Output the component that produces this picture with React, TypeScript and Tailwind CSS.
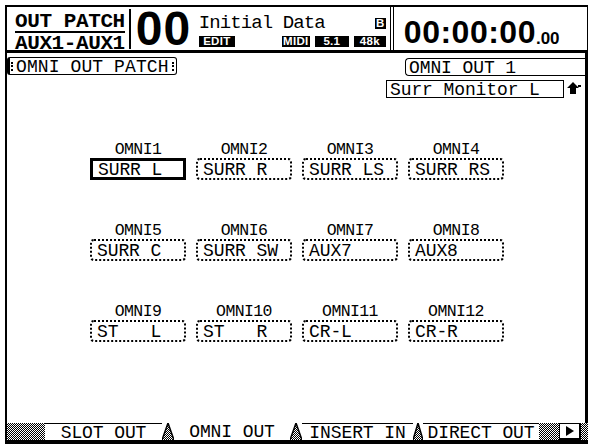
import React from "react";

const lcd = "font-['Liberation_Mono',monospace]";
const dither =
  "bg-[repeating-conic-gradient(#000_0_25%,#fff_0_50%)] bg-[length:2px_2px]";

const slots = [
  ["OMNI1", "SURR L"],
  ["OMNI2", "SURR R"],
  ["OMNI3", "SURR LS"],
  ["OMNI4", "SURR RS"],
  ["OMNI5", "SURR C"],
  ["OMNI6", "SURR SW"],
  ["OMNI7", "AUX7"],
  ["OMNI8", "AUX8"],
  ["OMNI9", "ST   L"],
  ["OMNI10", "ST   R"],
  ["OMNI11", "CR-L"],
  ["OMNI12", "CR-R"],
];

function Tag({ text, width }: { text: string; width: string }) {
  return (
    <span
      className={`${width} h-[11px] flex items-center justify-center bg-black text-white font-['Liberation_Sans',sans-serif] font-bold text-[11.5px] leading-none tracking-[0.3px] pt-[1px]`}
    >
      {text}
    </span>
  );
}

function Header() {
  return (
    <div className="flex h-[48px] border-t-2 border-l-2 border-b-[3px] border-black">
      <div className="flex items-center">
        <div className="pl-[8px] pr-[4px] pt-[4px] border-r-2 border-black h-[40px] font-['Liberation_Mono',monospace] font-bold text-[21px] leading-[17px] tracking-[-0.4px]">
          <div className="border-b-2 border-black pb-[1px]">OUT PATCH</div>
          <div className="pt-[2px]">AUX1-AUX1</div>
        </div>
        <div className="pl-[5px] w-[64px] font-['Liberation_Sans',sans-serif] font-bold text-[48px] leading-none tracking-[1px]">
          00
        </div>
      </div>
      <div className="w-[196px] pl-[4px] pr-[4px] flex flex-col justify-between pb-[3px] pt-[6px] border-r-[1.5px] border-black">
        <div className="flex items-center justify-between">
          <span className={`${lcd} text-[19px] leading-[20px] tracking-[-0.9px]`}>
            Initial Data
          </span>
          <Tag text="B" width="w-[11px]" />
        </div>
        <div className="flex items-center">
          <Tag text="EDIT" width="w-[36px]" />
          <span className="ml-auto flex gap-[5px]">
            <Tag text="MIDI" width="w-[28px]" />
            <Tag text="5.1" width="w-[34px]" />
            <Tag text="48k" width="w-[32px]" />
          </span>
        </div>
      </div>
      <div className="ml-[2px] flex-1 border-l-[1.5px] border-r-[1.5px] border-black flex items-end pl-[10px] pb-[5px] font-['Liberation_Sans',sans-serif] font-bold">
        <span className="text-[32px] leading-[26px] tracking-[0.5px]">00:00:00</span>
        <span className="text-[17px] leading-[13px]">.00</span>
      </div>
    </div>
  );
}

function UpArrow() {
  return (
    <svg width="16" height="14" viewBox="0 0 16 14" className="ml-[2px]">
      <polygon points="7,0 13,6 10,6 10,12 4,12 4,6 1,6" fill="#000" />
      <rect x="12" y="3" width="3" height="2" fill="#000" />
    </svg>
  );
}

function Slot({
  label,
  value,
  current,
}: {
  label: string;
  value: string;
  current: boolean;
}) {
  return (
    <div className="flex flex-col items-center w-[96px]">
      <div className={`${lcd} text-[16.5px] leading-[15px] tracking-[-0.6px]`}>
        {label}
      </div>
      <div
        className={`mt-[1px] w-full h-[22px] flex items-center pl-[5px] pt-[2px] whitespace-pre ${lcd} text-[18px] leading-none tracking-[-0.1px] ${
          current
            ? "border-[3px] border-black"
            : "border-2 border-dotted border-black rounded-[4px]"
        }`}
      >
        {value}
      </div>
    </div>
  );
}

function Tab({
  label,
  width,
  active,
}: {
  label: string;
  width: string;
  active: boolean;
}) {
  return (
    <div
      className={`${width} h-full flex items-center justify-center pt-[1px] ${lcd} text-[18px] leading-none tracking-[-0.1px] ${
        active ? "" : "border-t-[1.5px] border-black"
      }`}
    >
      {label}
    </div>
  );
}

// dithered wedge between two tabs
function Sep({ w }: { w: number }) {
  return (
    <svg width={w} height="17" viewBox={`0 0 ${w} 17`} className="shrink-0">
      <defs>
        <pattern id="dots" width="2" height="2" patternUnits="userSpaceOnUse">
          <rect width="1" height="1" fill="#000" />
          <rect x="1" y="1" width="1" height="1" fill="#000" />
        </pattern>
      </defs>
      <polygon points={`${w / 2},0 ${w},17 0,17`} fill="url(#dots)" />
      <polyline
        points={`0,17 ${w / 2},0 ${w},17`}
        fill="none"
        stroke="#000"
        strokeWidth="1.5"
      />
    </svg>
  );
}

export default function App() {
  return (
    <div className="w-[595px] h-[448px] bg-white pl-[5px] pt-[5px] text-black">
      <div className="w-[583px] h-[439px] flex flex-col">
        <Header />

        <div className="flex-1 border-l-2 border-r-[3px] border-black flex flex-col">
          <div className="flex items-start mt-[4px]">
            <div
              className={`h-[18px] flex items-center gap-[3px] border-[1.5px] border-l-[3px] border-black rounded-[3px] pl-[1px] pr-[2px] ${lcd} text-[18px] leading-none tracking-[0.1px]`}
            >
              <span className="h-[9px] border-l-2 border-dotted border-black" />
              <span className="pt-[1px]">OMNI OUT PATCH</span>
              <span className="h-[9px] border-l-2 border-dotted border-black" />
            </div>
            <div
              className={`ml-auto mt-[1px] w-[180px] h-[18px] flex items-center border-[1.5px] border-r-0 border-black rounded-l-[4px] pl-[3px] pt-[1px] whitespace-pre ${lcd} text-[18px] leading-none tracking-[-0.1px]`}
            >
              OMNI OUT 1
            </div>
          </div>
          <div className="flex items-center justify-end mt-[4px] pr-[3px]">
            <div
              className={`w-[178px] h-[18px] flex items-center border-[1.5px] border-black pl-[3px] pt-[1px] ${lcd} text-[18px] leading-none tracking-[-0.1px]`}
            >
              Surr Monitor L
            </div>
            <UpArrow />
          </div>

          <div className="mt-[44px] ml-[83px] grid grid-cols-[repeat(4,96px)] gap-x-[10px] gap-y-[43px]">
            {slots.map(([label, value], i) => (
              <Slot key={label} label={label} value={value} current={i === 0} />
            ))}
          </div>
        </div>

        <div className="h-[21px] flex items-start border-l-2 border-b-[4px] border-black">
          <div className={`w-[38px] h-full ${dither}`} />
          <Tab label="SLOT OUT" width="w-[117px]" active={false} />
          <Sep w={12} />
          <Tab label="OMNI OUT" width="w-[116px]" active />
          <Sep w={12} />
          <Tab label="INSERT IN" width="w-[111px]" active={false} />
          <Sep w={10} />
          <Tab label="DIRECT OUT" width="w-[116px]" active={false} />
          <div className={`w-[20px] h-full ${dither}`} />
          <div className="w-[22px] h-full border-[1.5px] border-b-[2.5px] border-r-[2.5px] border-black flex items-center justify-center">
            <svg width="8" height="10" viewBox="0 0 8 10">
              <polygon points="0,0 8,5 0,10" fill="#000" />
            </svg>
          </div>
          <div className={`flex-1 h-full ${dither}`} />
        </div>
      </div>
    </div>
  );
}
